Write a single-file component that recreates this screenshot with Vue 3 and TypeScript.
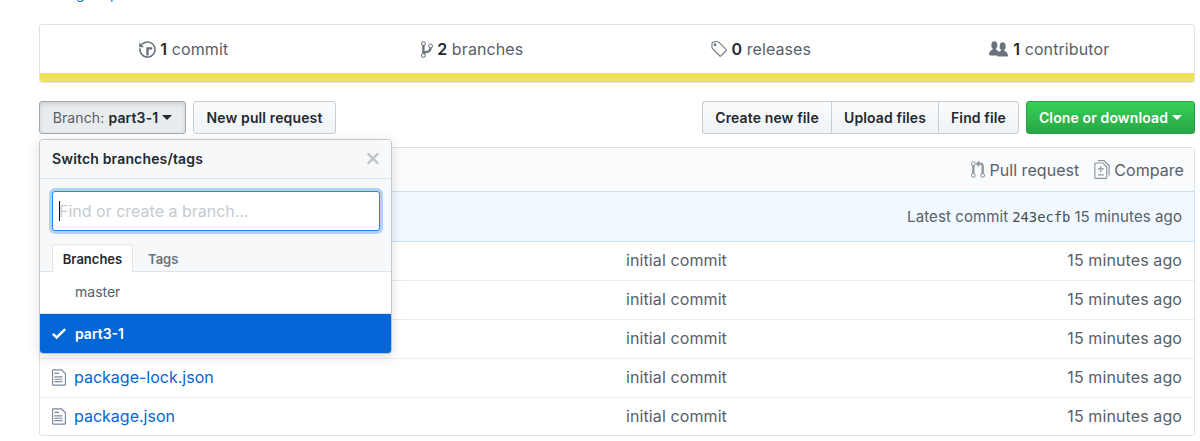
<script setup lang="ts">
interface Icon {
  w: number
  d: string
}

const icons: Record<string, Icon> = {
  history: { w: 14, d: 'M8 13H6V6h5v2H8v5zM7 1C4.81 1 2.87 2.02 1.59 3.59L0 2v4h4L2.5 4.5C3.55 3.17 5.17 2.3 7 2.3c3.14 0 5.7 2.56 5.7 5.7s-2.56 5.7-5.7 5.7A5.71 5.71 0 0 1 1.3 8c0-.34.03-.67.09-1H.08C.03 7.33 0 7.66 0 8c0 3.86 3.14 7 7 7s7-3.14 7-7-3.14-7-7-7z' },
  branch: { w: 10, d: 'M10 5c0-1.11-.89-2-2-2a1.993 1.993 0 0 0-1 3.72v.3c-.02.52-.23.98-.63 1.38-.4.4-.86.61-1.38.63-.83.02-1.48.16-2 .45V4.72a1.993 1.993 0 0 0-1-3.72C.88 1 0 1.89 0 3a2 2 0 0 0 1 1.72v6.56c-.59.35-1 .99-1 1.72 0 1.11.89 2 2 2 1.11 0 2-.89 2-2 0-.53-.2-1-.53-1.36.09-.06.48-.41.59-.47.25-.11.56-.17.94-.17 1.05-.05 1.95-.45 2.75-1.25S8.95 7.77 9 6.73h-.02C9.59 6.37 10 5.73 10 5zM2 1.8c.66 0 1.2.55 1.2 1.2 0 .65-.55 1.2-1.2 1.2C1.35 4.2.8 3.65.8 3c0-.65.55-1.2 1.2-1.2zm0 12.41c-.66 0-1.2-.55-1.2-1.2 0-.65.55-1.2 1.2-1.2.65 0 1.2.55 1.2 1.2 0 .65-.55 1.2-1.2 1.2zm6-8c-.66 0-1.2-.55-1.2-1.2 0-.65.55-1.2 1.2-1.2.65 0 1.2.55 1.2 1.2 0 .65-.55 1.2-1.2 1.2z' },
  tag: { w: 14, d: 'M7.73 1.73C7.26 1.26 6.62 1 5.96 1H3.5C2.13 1 1 2.13 1 3.5v2.47c0 .66.27 1.3.73 1.77l6.06 6.06c.39.39 1.02.39 1.41 0l4.59-4.59a.996.996 0 0 0 0-1.41L7.73 1.73zM2.38 7.09c-.31-.3-.47-.7-.47-1.13V3.5c0-.88.72-1.59 1.59-1.59h2.47c.42 0 .83.16 1.13.47l6.14 6.13-4.73 4.73-6.13-6.15zM3.01 3h2v2H3V3h.01z' },
  people: { w: 16, d: 'M16 12.999c0 .439-.45 1-1 1H7.995c-.539 0-.994-.447-.995-.999H1c-.54 0-1-.561-1-1 0-2.634 3-4 3-4s.229-.409 0-1c-.841-.621-1.058-.59-1-3 .058-2.419 1.367-3 2.5-3s2.442.58 2.5 3c.058 2.41-.159 2.379-1 3-.229.59 0 1 0 1s1.549.711 2.42 2.088C9.196 9.369 10 8.999 10 8.999s.229-.409 0-1c-.841-.62-1.058-.59-1-3 .058-2.419 1.367-3 2.5-3s2.437.581 2.495 3c.059 2.41-.158 2.38-1 3-.229.59 0 1 0 1s3.005 1.366 3.005 4z' },
  pull: { w: 12, d: 'M11 11.28V5c-.03-.78-.34-1.47-.94-2.06C9.46 2.35 8.78 2.03 8 2H7V0L4 3l3 3V4h1c.27.02.48.11.69.31.21.2.3.42.31.69v6.28A1.993 1.993 0 0 0 10 15a1.993 1.993 0 0 0 1-3.72zm-1 2.92c-.66 0-1.2-.55-1.2-1.2 0-.65.55-1.2 1.2-1.2.65 0 1.2.55 1.2 1.2 0 .65-.55 1.2-1.2 1.2zM4 3c0-1.11-.89-2-2-2a1.993 1.993 0 0 0-1 3.72v6.56A1.993 1.993 0 0 0 2 15a1.993 1.993 0 0 0 1-3.72V4.72c.59-.34 1-.98 1-1.72zm-.8 10c0 .66-.55 1.2-1.2 1.2-.65 0-1.2-.55-1.2-1.2 0-.65.55-1.2 1.2-1.2.65 0 1.2.55 1.2 1.2zM2 4.2C1.34 4.2.8 3.65.8 3c0-.65.55-1.2 1.2-1.2.65 0 1.2.55 1.2 1.2 0 .65-.55 1.2-1.2 1.2z' },
  diff: { w: 13, d: 'M6 7h2v1H6v2H5V8H3V7h2V5h1v2zm-3 6h5v-1H3v1zM7.5 2L11 5.5V15c0 .55-.45 1-1 1H1c-.55 0-1-.45-1-1V3c0-.55.45-1 1-1h6.5zM10 6L7 3H1v12h9V6zM8.5 0H3v1h5l4 4v8h1V4.5L8.5 0z' },
  file: { w: 12, d: 'M6 5H2V4h4v1zM2 8h7V7H2v1zm0 2h7V9H2v1zm0 2h7v-1H2v1zm10-7.5V14c0 .55-.45 1-1 1H1c-.55 0-1-.45-1-1V2c0-.55.45-1 1-1h7.5L12 4.5zM11 5L8 2H1v12h10V5z' },
  check: { w: 12, d: 'M12 5l-8 8-4-4 1.5-1.5L4 10l6.5-6.5z' },
  close: { w: 12, d: 'M7.48 8l3.75 3.75-1.48 1.48L6 9.48l-3.75 3.75-1.48-1.48L4.52 8 .77 4.25l1.48-1.48L6 6.52l3.75-3.75 1.48 1.48z' },
}

const stats = [
  { icon: 'history', count: 1, label: 'commit' },
  { icon: 'branch', count: 2, label: 'branches' },
  { icon: 'tag', count: 0, label: 'releases' },
  { icon: 'people', count: 1, label: 'contributor' },
]

const files = ['', '', '', 'package-lock.json', 'package.json']
const fileActions = ['Create new file', 'Upload files', 'Find file']
</script>

<template>
  <div class="page">
    <div class="topics"><a class="topics-link">Manage topics</a></div>

    <section class="summary">
      <ul class="stats">
        <li v-for="s in stats" :key="s.label" class="stat">
          <svg class="icon" :class="'i-' + s.icon" :viewBox="`0 0 ${icons[s.icon].w} 16`"><path :d="icons[s.icon].d" /></svg>
          <span><b class="count">{{ s.count }}</b> {{ s.label }}</span>
        </li>
      </ul>
      <div class="langbar"></div>
    </section>

    <div class="toolbar">
      <div class="branch-wrap">
        <button class="btn btn-branch"><span class="muted">Branch:</span><span>part3-1</span><i class="caret"></i></button>
        <div class="menu">
          <header class="menu-head">
            <span>Switch branches/tags</span>
            <svg class="i-close" viewBox="0 0 12 16"><path :d="icons.close.d" /></svg>
          </header>
          <div class="menu-filter">
            <div class="field"><i class="cursor"></i><span class="ph">Find or create a branch...</span></div>
            <nav class="tabs">
              <a class="tab active">Branches</a>
              <a class="tab">Tags</a>
            </nav>
          </div>
          <div class="item">master</div>
          <div class="item selected">
            <svg class="i-check" viewBox="0 0 12 16"><path :d="icons.check.d" /></svg>part3-1
          </div>
        </div>
      </div>
      <button class="btn btn-pr">New pull request</button>
      <div class="group">
        <button v-for="a in fileActions" :key="a" class="btn">{{ a }}</button>
      </div>
      <button class="btn btn-clone"><span>Clone or download</span><i class="caret"></i></button>
    </div>

    <section class="files">
      <div class="files-head">
        <a class="action"><svg class="i-pull" viewBox="0 0 12 16"><path :d="icons.pull.d" /></svg><span>Pull request</span></a>
        <a class="action"><svg class="i-diff" viewBox="0 0 13 16"><path :d="icons.diff.d" /></svg><span>Compare</span></a>
      </div>
      <div class="tease"><span>Latest commit</span><code class="sha">243ecfb</code><span>15 minutes ago</span></div>
      <div v-for="(f, i) in files" :key="i" class="row">
        <div class="name">
          <template v-if="f">
            <svg class="i-file" viewBox="0 0 12 16"><path :d="icons.file.d" /></svg><a>{{ f }}</a>
          </template>
        </div>
        <div class="msg">initial commit</div>
        <div class="time">15 minutes ago</div>
      </div>
    </section>
  </div>
</template>

<style>
body {
  background: #fff;
  overflow: hidden;
}
</style>

<style scoped>
* {
  box-sizing: border-box;
}
.page {
  width: 1156px;
  height: 441px;
  margin-left: 39px;
  font-family: Inter, "Liberation Sans", sans-serif;
  font-size: 16px;
  color: #586069;
  white-space: nowrap;
}
svg {
  fill: currentColor;
  flex: none;
  display: block;
}
.topics {
  display: flow-root;
  height: 24px;
}
.topics-link {
  display: block;
  margin-top: -15px;
  font-size: 14px;
  line-height: 18px;
  letter-spacing: 0.1px;
  color: #0366d6;
}
.summary {
  height: 59px;
  border: 1px solid #dfe2e5;
  border-radius: 3px;
  overflow: hidden;
}
.stats {
  display: grid;
  grid-template-columns: repeat(4, 1fr);
  height: 48px;
  margin: 0;
  padding: 0;
  list-style: none;
}
.stat {
  display: flex;
  justify-content: center;
  align-items: center;
  gap: 4px;
  padding-right: 1px;
  letter-spacing: 0.1px;
}
.icon {
  height: 19px;
  color: #6a737d;
}
.i-history, .i-tag { width: 17px; }
.i-branch { width: 12px; }
.i-people { width: 19px; margin-right: 1px; }
.count {
  font-weight: 600;
  color: #24292e;
}
.langbar {
  height: 9px;
  background: #f1e05a;
}
.toolbar {
  display: flex;
  height: 34px;
  margin-top: 18px;
}
.btn {
  display: flex;
  align-items: center;
  justify-content: center;
  height: 33px;
  margin: 0;
  padding: 0;
  font-family: inherit;
  font-size: 14px;
  font-weight: 600;
  letter-spacing: 0.13px;
  color: #24292e;
  border: 1px solid #cacdd1;
  border-radius: 3px;
  background: linear-gradient(#fafbfc, #eff3f6);
}
.caret {
  border: 5px solid transparent;
  border-top-color: currentColor;
  border-bottom: 0;
  margin-left: 4px;
}
.branch-wrap {
  position: relative;
}
.btn-branch {
  width: 147px;
  border-color: #a3a7ab;
  background: #e9ecef;
  box-shadow: inset 0 2px 4px rgba(27, 31, 35, 0.15);
}
.muted {
  font-weight: 400;
  color: #586069;
  margin-right: 4px;
}
.btn-pr {
  width: 143px;
  margin-left: 7px;
}
.group {
  display: grid;
  grid-template-columns: 129px 107px 81px;
  margin-left: auto;
}
.group .btn {
  border-radius: 0;
  border-right-width: 0;
}
.group .btn:first-child {
  border-radius: 3px 0 0 3px;
}
.group .btn:last-child {
  border-right-width: 1px;
  border-radius: 0 3px 3px 0;
}
.btn-clone {
  width: 169px;
  margin-left: 7px;
  color: #fff;
  border-color: #279f43;
  background: linear-gradient(#34d058, #28a745);
}
.menu {
  position: absolute;
  z-index: 2;
  top: 38px;
  left: 0;
  width: 353px;
  height: 215px;
  font-size: 14px;
  border: 1px solid #c3c7cb;
  border-radius: 4px;
  overflow: hidden;
  background: #fff;
  box-shadow: 0 3px 12px rgba(27, 31, 35, 0.15);
}
.menu-head {
  display: flex;
  align-items: center;
  justify-content: space-between;
  height: 39px;
  padding: 0 11px 1px 12px;
  font-weight: 600;
  letter-spacing: 0.16px;
  color: #24292e;
  background: #f6f8fa;
  border-bottom: 1px solid #e1e4e8;
}
.i-close {
  width: 14px;
  height: 19px;
  color: #c1c5ca;
}
.menu-filter {
  height: 93px;
  padding: 12px 11px 0 12px;
  background: #f6f8fa;
  border-bottom: 1px solid #e1e4e8;
}
.field {
  display: flex;
  align-items: center;
  height: 40px;
  padding-left: 6px;
  font-size: 16px;
  color: #c6cbd1;
  background: #fff;
  border: 1px solid #2188ff;
  border-radius: 3px;
  box-shadow: 0 0 0 3px #b3d2f3;
}
.cursor {
  width: 1px;
  height: 20px;
  margin-right: -1px;
  background: #111;
}
.tabs {
  display: flex;
  margin-top: 13px;
}
.tab {
  height: 28px;
  padding: 0 15px;
  line-height: 30px;
  font-size: 13px;
  font-weight: 600;
  color: #6a737d;
}
.tab.active {
  height: 29px;
  width: 81px;
  padding: 0;
  text-align: center;
  line-height: 28px;
  color: #24292e;
  background: #fff;
  border: 1px solid #e1e4e8;
  border-bottom: 0;
  border-radius: 3px 3px 0 0;
}
.item {
  display: flex;
  align-items: center;
  height: 42px;
  padding: 0 0 2px 35px;
  color: #586069;
  border-bottom: 1px solid #e1e4e8;
}
.item.selected {
  height: 40px;
  padding-left: 12px;
  font-weight: 600;
  color: #fff;
  background: #0366d6;
  border: 0;
}
.i-check {
  width: 14px;
  height: 19px;
  margin-right: 9px;
}
.files {
  margin-top: 12px;
  height: 289px;
  border: 1px solid #dfe2e5;
  border-radius: 3px;
}
.files-head {
  display: flex;
  align-items: center;
  justify-content: flex-end;
  gap: 15px;
  height: 43px;
  padding: 0 10px 0 0;
  background: #fafbfc;
}
.action {
  display: flex;
  align-items: center;
  gap: 4px;
  letter-spacing: 0.05px;
}
.i-pull { width: 14px; height: 19px; color: #8f969d; }
.i-diff { width: 16px; height: 19px; color: #8f969d; }
.tease {
  display: flex;
  align-items: center;
  justify-content: flex-end;
  height: 51px;
  margin: 0 -1px;
  padding-right: 12px;
  font-size: 15px;
  letter-spacing: 0.1px;
  background: #f1f8ff;
  border: 1px solid #c8e1ff;
}
.sha {
  margin: 0 4px;
  font-family: "DejaVu Sans Mono", monospace;
  font-size: 13.8px;
  letter-spacing: 0;
  color: #444d56;
}
.row {
  display: grid;
  grid-template-columns: 586px 1fr auto;
  align-items: center;
  height: 39px;
  padding: 0 12px 2px 0;
  letter-spacing: 0.1px;
  border-bottom: 1px solid #eaecef;
}
.row:last-child {
  height: 38px;
  border-bottom: 0;
}
.name {
  display: flex;
  align-items: center;
  padding-left: 12px;
  letter-spacing: 0;
  color: #0366d6;
}
.i-file {
  width: 14px;
  height: 19px;
  margin-right: 8px;
  color: #7b8ba0;
}
</style>
